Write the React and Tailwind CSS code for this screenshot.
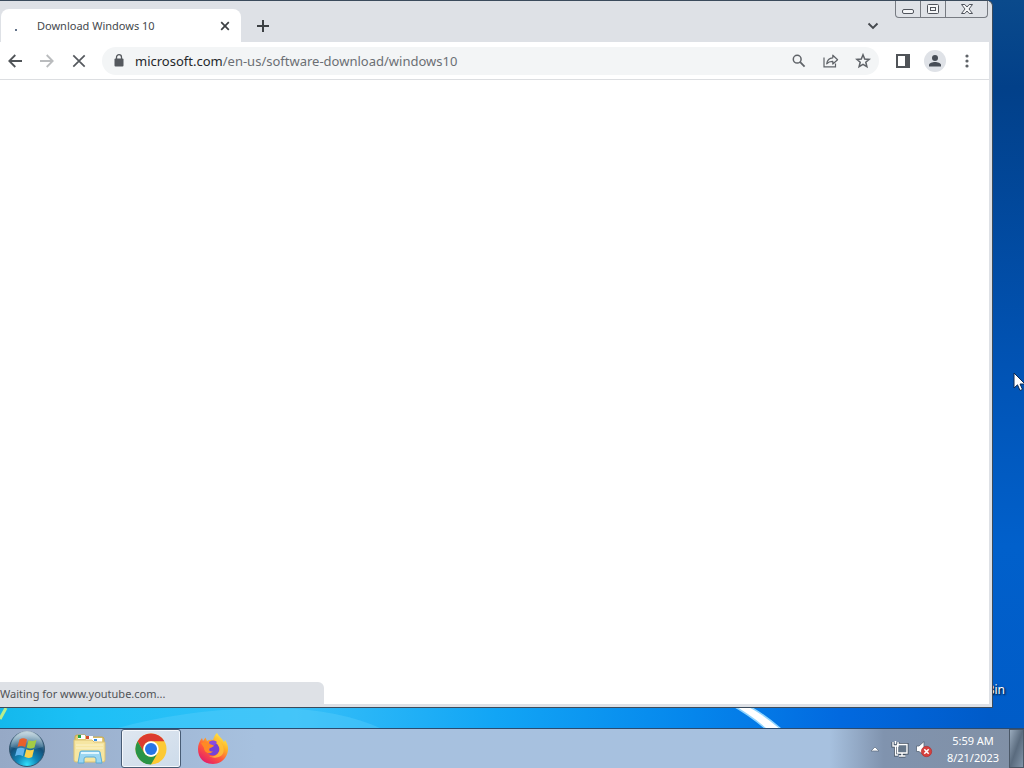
import { useState } from "react";

function Wallpaper() {
  return (
    <svg className="absolute inset-0 h-full w-full" viewBox="0 0 1024 728" preserveAspectRatio="none" aria-hidden="true">
      <defs>
        <linearGradient id="sky" x1="0" y1="0" x2="0" y2="1">
          <stop offset="0" stopColor="#0a4a8c" />
          <stop offset="0.12" stopColor="#024089" />
          <stop offset="0.5" stopColor="#0153b4" />
          <stop offset="0.75" stopColor="#0160cb" />
          <stop offset="1" stopColor="#005cc8" />
        </linearGradient>
        <linearGradient id="glow" x1="0" y1="0" x2="1" y2="0">
          <stop offset="0" stopColor="#14b8ec" />
          <stop offset="0.08" stopColor="#1cc0f6" />
          <stop offset="0.3" stopColor="#35bff8" />
          <stop offset="0.5" stopColor="#12a5f5" />
          <stop offset="0.7" stopColor="#0586ec" />
          <stop offset="0.85" stopColor="#0269df" />
          <stop offset="1" stopColor="#005bc9" />
        </linearGradient>
      </defs>
      <rect width="1024" height="728" fill="url(#sky)" />
      <rect y="700" width="990" height="28" fill="url(#glow)" />
      <path d="M0 719L6 708" stroke="#b9ec8c" strokeWidth="3" />
      <path d="M118 728Q190 708 280 708Q340 710 380 728Z" fill="#60d2fc" opacity="0.35" />
      <path d="M730 704H744Q760 711 781 729H766Q750 715 730 704Z" fill="#fff" stroke="#8fd4ff" strokeWidth="1.5" />
    </svg>
  );
}

function Tab() {
  return (
    <div className="ml-px mt-2 flex h-[34px] w-60 shrink-0 items-center rounded-t-lg bg-white pl-3 pr-2">
      <span className="mt-2 h-[2px] w-[2px] translate-x-0.5 bg-[#64748b]" />
      <span className="ml-[22px] flex-1 truncate text-[11px] text-[#45494d]">Download Windows 10</span>
      <button aria-label="Close tab" className="flex h-4 w-4 items-center justify-center">
        <svg width="10" height="10" viewBox="0 0 10 10" stroke="#3c4043" strokeWidth="1.7">
          <path d="M1.2 1.2L8.8 8.8M8.8 1.2L1.2 8.8" />
        </svg>
      </button>
    </div>
  );
}

function WindowControls() {
  return (
    <div className="mr-px flex h-[17px] overflow-hidden rounded-b-[4px] border border-t-0 border-[#777b82] bg-[#dfe2e7]">
      <button aria-label="Minimize" className="flex w-6 items-center justify-center">
        <svg width="14" height="16" viewBox="0 0 14 16" fill="#f5f6f8" stroke="#50545c">
          <rect x="1.5" y="8.5" width="11" height="4" rx="1.5" />
        </svg>
      </button>
      <button aria-label="Restore" className="flex w-[26px] items-center justify-center border-x border-[#777b82]">
        <svg width="14" height="16" viewBox="0 0 14 16" fill="#f5f6f8" stroke="#50545c">
          <rect x="1.5" y="3.5" width="11" height="9" rx="1" />
          <rect x="4.5" y="6.5" width="5" height="3" />
        </svg>
      </button>
      <button aria-label="Close" className="flex w-[41px] items-center justify-center">
        <svg width="14" height="16" viewBox="0 0 14 16" fill="#f5f6f8" stroke="#50545c">
          <path d="M1.5 3.5H4.8L7 6L9.2 3.5H12.5L9 8L12.5 12.5H9.2L7 10L4.8 12.5H1.5L5 8Z" />
        </svg>
      </button>
    </div>
  );
}

function TabStrip() {
  return (
    <div className="flex h-[41px] items-start bg-[#dee1e6]">
      <Tab />
      <button aria-label="New tab" className="mt-[17px] flex h-4 w-11 items-center justify-center">
        <svg width="12" height="12" viewBox="0 0 12 12" stroke="#3c4043" strokeWidth="2">
          <path d="M6 0V12M0 6H12" />
        </svg>
      </button>
      <div className="flex-1" />
      <button aria-label="Search tabs" className="mr-4 mt-[17px] flex h-4 w-3 items-center justify-center">
        <svg width="12" height="8" viewBox="0 0 12 8" fill="none" stroke="#45494e" strokeWidth="1.9">
          <path d="M1.5 1.5L6 6L10.5 1.5" />
        </svg>
      </button>
      <WindowControls />
    </div>
  );
}

function ToolButton({ label, children, className = "" }) {
  return (
    <button aria-label={label} className={`flex h-8 w-8 shrink-0 items-center justify-center ${className}`}>
      {children}
    </button>
  );
}

function AddressBar() {
  const [editing, setEditing] = useState(false);
  return (
    <div className="ml-[7px] flex h-7 min-w-0 flex-1 items-center rounded-full bg-[#f3f5f6] pl-3">
      <svg width="10" height="13" viewBox="0 0 10 13" className="shrink-0">
        <rect x="0.5" y="4.5" width="9" height="8" rx="1" fill="#55595e" />
        <path d="M2.5 5V3.2A2.5 2.5 0 0 1 7.5 3.2V5" fill="none" stroke="#55595e" strokeWidth="1.3" />
      </svg>
      <a
        href="#address"
        aria-label="Address and search bar"
        onClick={() => setEditing(!editing)}
        className="ml-[11px] flex-1 truncate text-[13px] leading-5 text-[#6b6f74]"
      >
        <span className="text-[#25282c]">microsoft.com</span>/en-us/software-download/windows10
      </a>
      <ToolButton label="Zoom">
        <svg width="14" height="14" viewBox="0 0 14 14" fill="none" stroke="#5f6368" strokeWidth="1.5">
          <circle cx="5.2" cy="5.2" r="3.9" />
          <path d="M8.2 8.2L12.6 12.6" strokeWidth="1.8" />
        </svg>
      </ToolButton>
      <ToolButton label="Share">
        <svg width="16" height="14" viewBox="0 0 16 14" fill="none" stroke="#5f6368" strokeWidth="1.2">
          <path d="M1 3.5V12.8H12.5V9.5" />
          <path d="M3.7 9.8C4.2 6 6.2 4 9.8 3.8V1.2L14.6 5.7L9.8 10V7.3C7 7.2 5.2 8 3.7 9.8Z" strokeLinejoin="round" />
        </svg>
      </ToolButton>
      <ToolButton label="Bookmark">
        <svg width="16" height="16" viewBox="0 0 16 16" fill="none" stroke="#5f6368" strokeWidth="1.5">
          <path d="M8 1.8L9.7 6L14.2 6.4L10.8 9.3L11.9 13.7L8 11.3L4.1 13.7L5.2 9.3L1.8 6.4L6.3 6Z" />
        </svg>
      </ToolButton>
    </div>
  );
}

function Toolbar() {
  return (
    <div className="flex h-[38px] items-center border-b border-[#dcdee1] bg-white pr-1.5">
      <ToolButton label="Back" className="-ml-px">
        <svg width="14" height="14" viewBox="0 0 14 14" fill="none" stroke="#505458" strokeWidth="1.8">
          <path d="M14 7H1.5M7.3 1L1.3 7L7.3 13" />
        </svg>
      </ToolButton>
      <ToolButton label="Forward">
        <svg width="14" height="14" viewBox="0 0 14 14" fill="none" stroke="#babcbe" strokeWidth="1.8">
          <path d="M0 7H12.5M6.7 1L12.7 7L6.7 13" />
        </svg>
      </ToolButton>
      <ToolButton label="Stop loading">
        <svg width="14" height="14" viewBox="0 0 14 14" stroke="#55595e" strokeWidth="1.7">
          <path d="M1.3 1.3L12.7 12.7M12.7 1.3L1.3 12.7" />
        </svg>
      </ToolButton>
      <AddressBar />
      <ToolButton label="Side panel" className="ml-2">
        <svg width="14" height="14" viewBox="0 0 14 14">
          <rect x="1" y="1" width="12" height="12" fill="#fff" stroke="#505458" strokeWidth="2" />
          <rect x="9" y="1" width="5" height="12" fill="#505458" />
        </svg>
      </ToolButton>
      <ToolButton label="Profile">
        <svg width="22" height="22" viewBox="0 0 22 22">
          <circle cx="11" cy="11" r="11" fill="#dfe2e7" />
          <circle cx="11" cy="8" r="3" fill="#474d56" />
          <path d="M5 16.5V15C5 13 8.5 12 11 12S17 13 17 15V16.5Z" fill="#474d56" />
        </svg>
      </ToolButton>
      <ToolButton label="Menu">
        <svg width="4" height="14" viewBox="0 0 4 14" fill="#5f6368">
          <circle cx="2" cy="2" r="1.6" />
          <circle cx="2" cy="7" r="1.6" />
          <circle cx="2" cy="12" r="1.6" />
        </svg>
      </ToolButton>
    </div>
  );
}

function BrowserWindow() {
  return (
    <main className="relative mb-5 mr-[31px] flex flex-1 flex-col rounded-tr-md border-b border-r border-t border-[#3b4b5c] bg-[#dee1e6]">
      <div className="flex flex-1 flex-col rounded-tr-md pb-[3px] pr-[3px]">
        <TabStrip />
        <Toolbar />
        <div className="flex flex-1 items-end bg-white">
          <p className="h-[22px] w-[324px] rounded-tr-md bg-[#dee1e6] text-[11px] leading-6 text-[#505357]">
            Waiting for www.youtube.com...
          </p>
        </div>
      </div>
    </main>
  );
}

function StartOrb() {
  return (
    <svg width="38" height="38" viewBox="0 0 38 38">
      <defs>
        <radialGradient id="orb" cx="0.5" cy="0.95" r="0.85">
          <stop offset="0" stopColor="#32e0fb" />
          <stop offset="0.35" stopColor="#1187b8" />
          <stop offset="0.7" stopColor="#145079" />
          <stop offset="1" stopColor="#6f93aa" />
        </radialGradient>
        <linearGradient id="orbShine" x1="0" y1="0" x2="0" y2="1">
          <stop offset="0" stopColor="#e4f0f4" stopOpacity="0.8" />
          <stop offset="1" stopColor="#a5c5d5" stopOpacity="0.15" />
        </linearGradient>
      </defs>
      <circle cx="19" cy="19" r="17.5" fill="url(#orb)" stroke="#35566f" />
      <path d="M3 17A16 16 0 0 1 35 17Q19 22 3 17Z" fill="url(#orbShine)" />
      <path d="M11.5 9.5Q15 7 19 9.5L17.2 17.2Q13.5 15 9.5 17Z" fill="#e8602b" />
      <path d="M20.5 10.2Q24.5 12 28.5 9.8L26.5 17.5Q22.5 19.6 18.7 17.6Z" fill="#a4cb45" />
      <path d="M9 18.7Q13 16.8 16.8 18.8L14.9 26.2Q11 24 7 26.2Z" fill="#62b5ed" />
      <path d="M18.3 19.3Q22 21.4 26.1 19.3L24.2 27Q20.3 29 16.4 26.8Z" fill="#fbd24b" />
    </svg>
  );
}

function ExplorerIcon() {
  return (
    <svg width="34" height="32" viewBox="0 0 34 32">
      <path d="M2 4Q2 2 4 2H12L14 4H29Q31 4 31 6V27H2Z" fill="#e6cd74" stroke="#c8aa52" />
      <rect x="5" y="2" width="7" height="4" fill="#fff" />
      <rect x="5" y="2" width="3" height="3" fill="#25a548" />
      <rect x="13" y="3" width="7" height="4" fill="#fff" />
      <rect x="13" y="3" width="3" height="3" fill="#d64b2c" />
      <rect x="20" y="5" width="9" height="4" fill="#fff" />
      <rect x="21" y="6" width="3" height="2" fill="#348de0" />
      <path d="M1 7H19L21 9H32V27Q32 29 30 29H3Q1 29 1 27Z" fill="#f6e6a2" stroke="#dcc272" />
      <path d="M3 12H30M3 15H30" stroke="#fbf3cb" />
      <path d="M5 30L7 19Q7 18 9 18H25Q27 18 27 19L29 30H23V26Q23 24 21 24H13Q11 24 11 26V30Z" fill="#9bd6f2" stroke="#59acd7" />
      <path d="M8 20H26" stroke="#e0f6ff" strokeWidth="2" />
    </svg>
  );
}

function ChromeIcon() {
  return (
    <svg width="32" height="32" viewBox="0 0 32 32">
      <circle cx="16" cy="16" r="15.5" fill="#fcc934" />
      <path d="M2.6 8.2A15.5 15.5 0 0 1 29.4 8.2H16A7.8 7.8 0 0 0 9.2 19.9Z" fill="#dc3b2f" />
      <path d="M2.6 8.2L9.3 19.9A7.8 7.8 0 0 0 22.7 19.9L16 31.5A15.5 15.5 0 0 1 2.6 8.2Z" fill="#299447" />
      <circle cx="16" cy="16" r="7.7" fill="#fff" />
      <circle cx="16" cy="16" r="6" fill="#2775e6" />
    </svg>
  );
}

function FirefoxIcon() {
  return (
    <svg width="32" height="32" viewBox="0 0 32 32">
      <defs>
        <linearGradient id="fox" x1="0.85" y1="0.05" x2="0.25" y2="0.95">
          <stop offset="0" stopColor="#fff04b" />
          <stop offset="0.35" stopColor="#ffad25" />
          <stop offset="0.65" stopColor="#ff593d" />
          <stop offset="1" stopColor="#e52067" />
        </linearGradient>
      </defs>
      <path
        d="M20 0C22 4 25 5 27 9L28 7C30 10 31.5 13 31 17C30.2 25 24 31 16 31C7 31 1 25 1 16C1 12 2.4 8 5 5L6 8L8.5 4.5L10 8C12 6.7 14 6.5 16 7C17 4 18 1.5 20 0Z"
        fill="url(#fox)"
      />
      <circle cx="16" cy="16" r="6.5" fill="#7542d8" />
      <path d="M12 9C14 7 18 7 20 9L18 12H13Z" fill="#8a4be0" />
      <path d="M4 10C8 8 11 9 12.5 11L17 12.5C16 14.5 13 14.5 12.5 15.5C11.5 17.5 13 19 16 18.5C12 22.5 7 19 7 15Z" fill="#ff8a25" />
      <path d="M20 3C21 8 28 11 26.5 19C25 25 17 26 12 23C18 25 23 20 22.5 16C22 12 18 10 20 3Z" fill="#ffc43b" opacity="0.8" />
    </svg>
  );
}

function Tray() {
  return (
    <div className="flex items-center">
      <button aria-label="Show hidden icons" className="flex h-8 w-6 items-center justify-center">
        <svg width="10" height="6" viewBox="0 0 10 6">
          <path d="M1 5L5 1L9 5Z" fill="#fff" stroke="#5c6b7e" strokeWidth="0.7" />
        </svg>
      </button>
      <button aria-label="Network" className="flex h-8 w-[26px] items-center justify-center">
        <svg width="18" height="18" viewBox="0 0 18 18" fill="none">
          <path d="M6.5 4.5H16V13H6.5ZM11 13V16M8 16H14.5M2 2V6H7V2M4.5 6V15H7" stroke="#3f4c5c" strokeWidth="3" />
          <path d="M6.5 4.5H16V13H6.5Z" fill="#66778a" stroke="#fff" strokeWidth="1.4" />
          <path d="M11 13V16M8 16H14.5" stroke="#fff" strokeWidth="1.4" />
          <path d="M2 2V6H7V2M4.5 1V4M4.5 6V15H7" stroke="#fff" strokeWidth="1.4" />
        </svg>
      </button>
      <button aria-label="Volume muted" className="flex h-8 w-[22px] items-center justify-center">
        <svg width="18" height="18" viewBox="0 0 18 18">
          <path d="M1.5 6H4L9 1.5V15.5L4 11.5H1.5Z" fill="#fff" stroke="#566577" strokeWidth="0.8" />
          <circle cx="11.5" cy="11.5" r="5.2" fill="#d6403d" stroke="#ad2b2d" strokeWidth="0.6" />
          <path d="M9.3 9.3L13.7 13.7M13.7 9.3L9.3 13.7" stroke="#fff" strokeWidth="1.6" />
        </svg>
      </button>
      <button className="w-[74px] pl-0.5 text-center text-[11px] leading-[17px] text-white">
        <span className="block">5:59 AM</span>
        <span className="block">8/21/2023</span>
      </button>
      <button
        aria-label="Show desktop"
        className="h-[39px] w-[15px] border border-[#4b5867] bg-linear-to-br from-[#9aabbd] via-[#5a6b7e] to-[#8295a9]"
      />
    </div>
  );
}

function Taskbar() {
  return (
    <footer className="flex h-10 shrink-0 items-center border-t border-[#2b4b70] bg-linear-to-r from-[#96a9c6] via-[#a7c1df] via-25% to-[#a7c1df]">
      <button aria-label="Start" className="ml-2 flex w-[38px] justify-center">
        <StartOrb />
      </button>
      <button aria-label="Windows Explorer" className="ml-3 flex w-[60px] justify-center pl-1">
        <ExplorerIcon />
      </button>
      <button
        aria-label="Google Chrome"
        className="ml-[3px] flex h-[39px] w-[60px] items-center justify-center rounded-[3px] border border-[#485c75] bg-linear-to-br from-[#dfe7f0] to-[#cddbea] shadow-[inset_0_0_0_1px_#f5f8fc]"
      >
        <ChromeIcon />
      </button>
      <button aria-label="Firefox" className="flex w-16 justify-center">
        <FirefoxIcon />
      </button>
      <div className="flex flex-1 justify-end bg-linear-to-r from-transparent from-75% via-[#8093ae] via-82% to-[#8190a5]">
        <Tray />
      </div>
    </footer>
  );
}

export default function App() {
  return (
    <div className="relative flex h-screen flex-col overflow-hidden font-['Noto_Sans','Open_Sans',sans-serif]">
      <div className="relative flex flex-1 flex-col">
        <Wallpaper />
        <span className="absolute bottom-[30px] right-[19px] text-[12px] leading-4 text-white [text-shadow:1px_1px_2px_#000]">
          Bin
        </span>
        <BrowserWindow />
      </div>
      <Taskbar />
      <svg className="absolute right-[-2px] top-[372px]" width="13" height="20" viewBox="0 0 13 20" aria-hidden="true">
        <path d="M1 1V16L4.5 12.8L7 18.5L9.5 17.4L7 12H12Z" fill="#fff" stroke="#102a50" />
      </svg>
    </div>
  );
}
